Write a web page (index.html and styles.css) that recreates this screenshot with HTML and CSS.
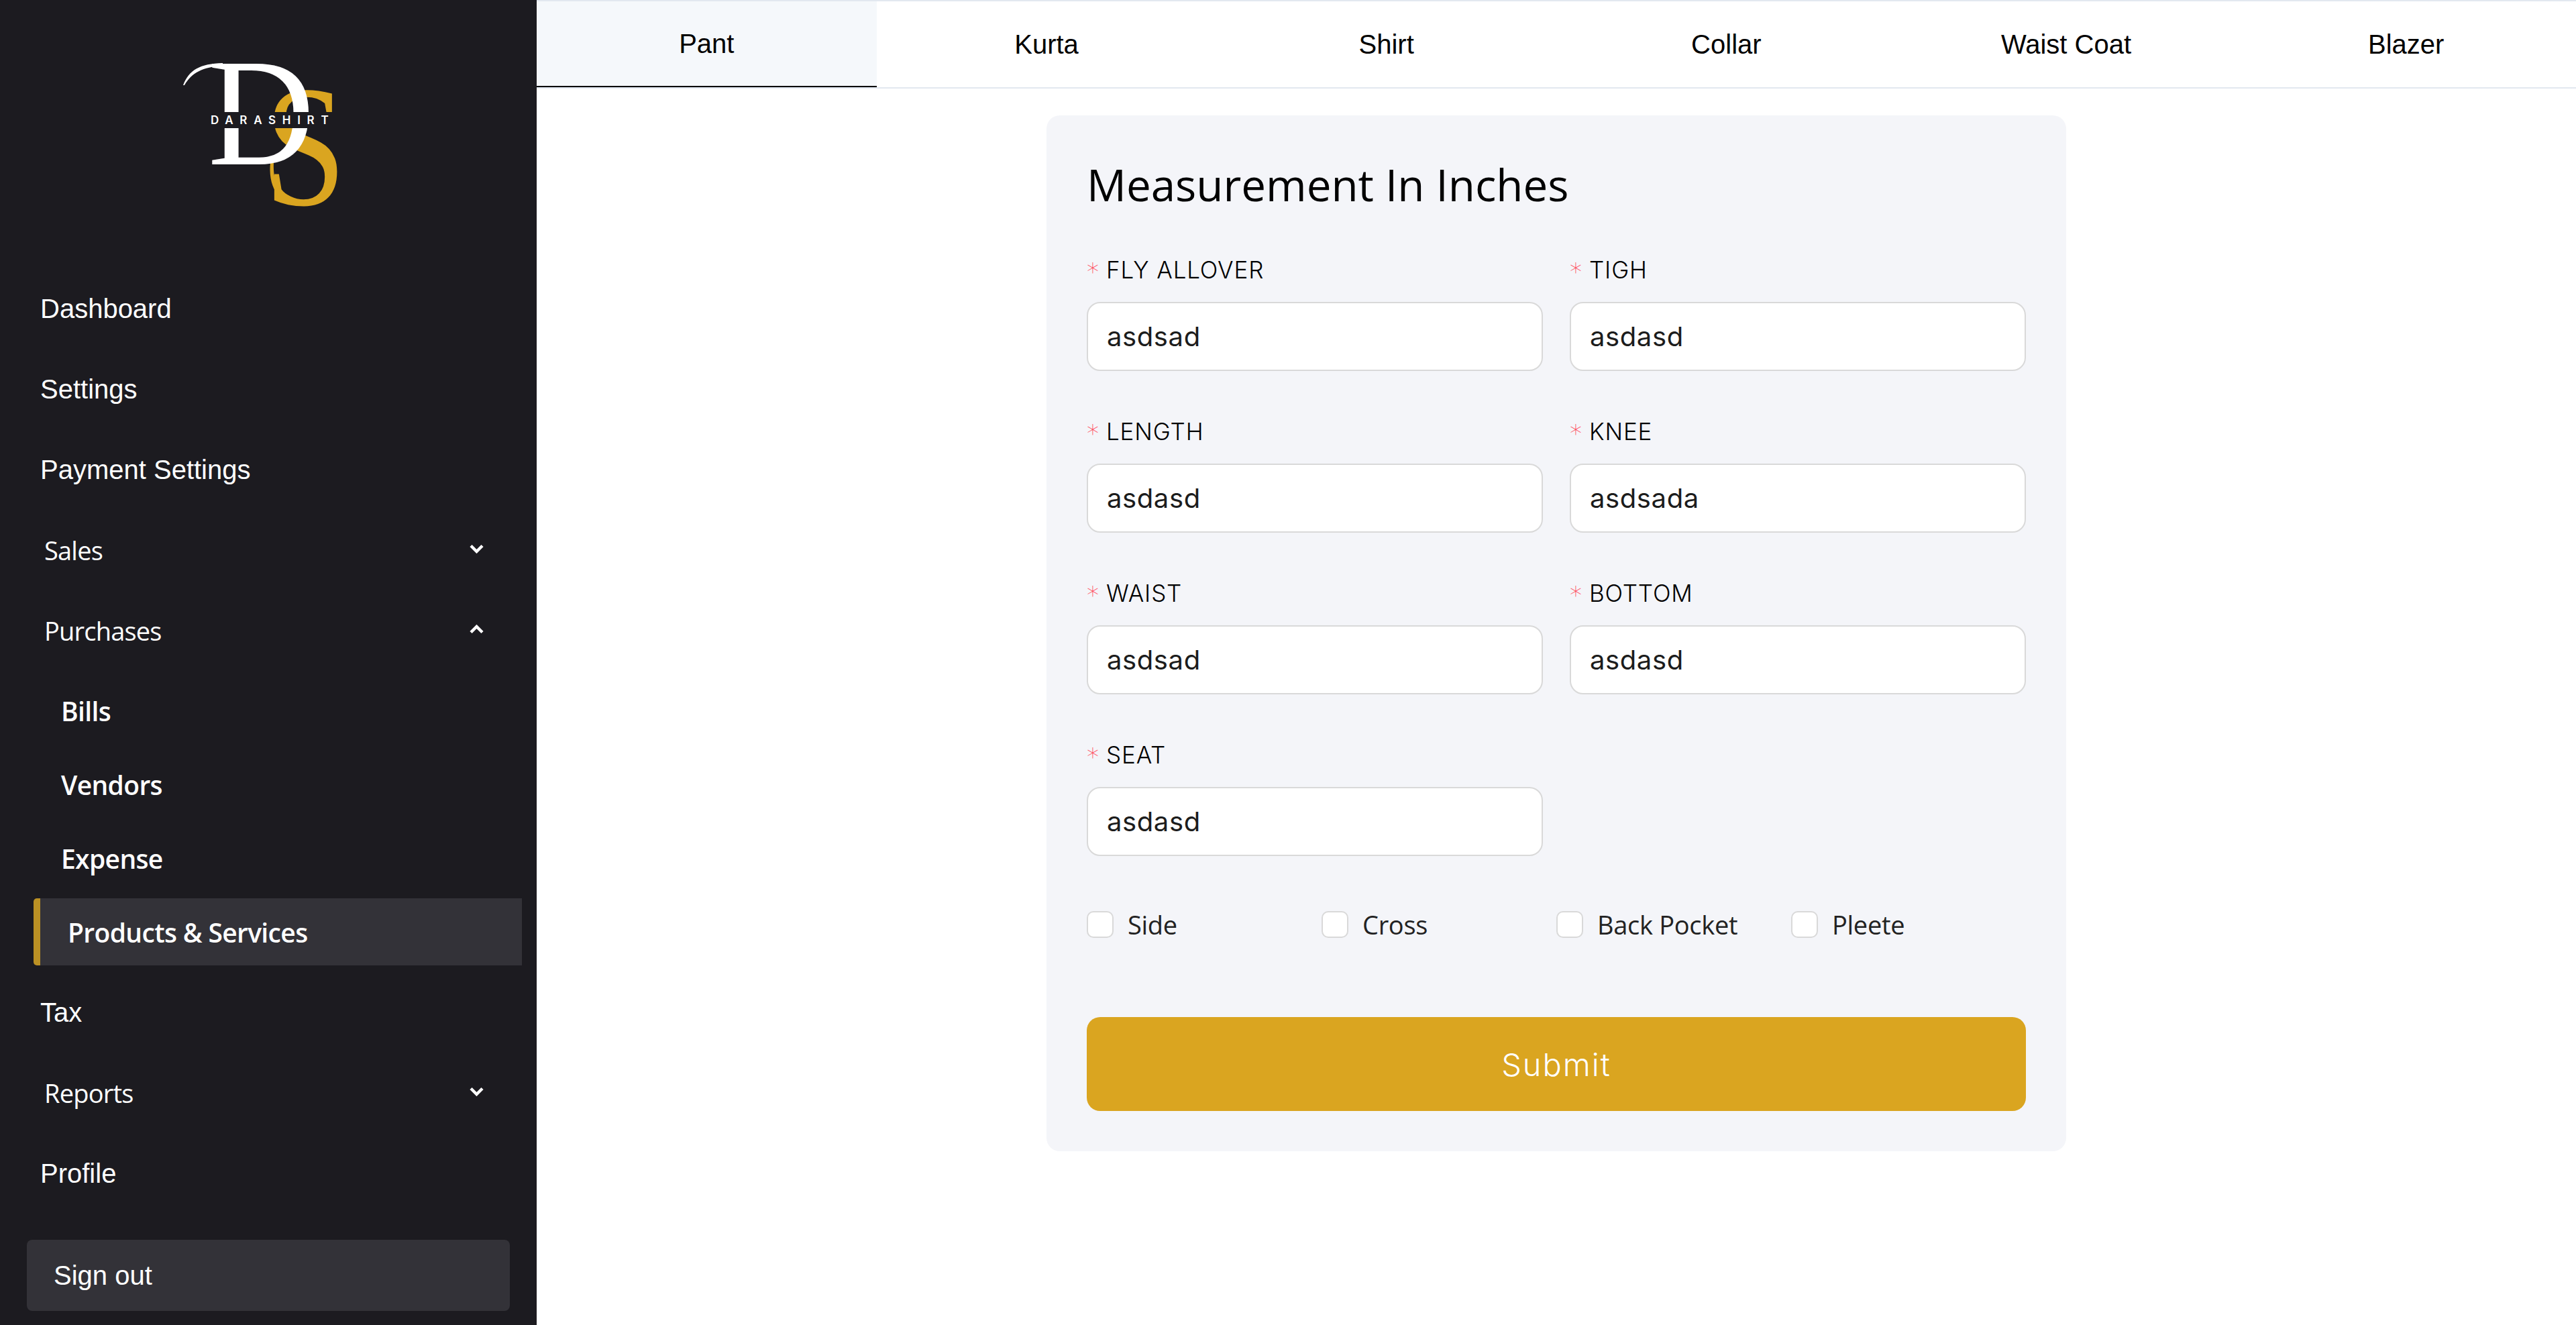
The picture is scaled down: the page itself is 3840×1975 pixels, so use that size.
FILE: index.html
```html
<!DOCTYPE html>
<html lang="en">
<head>
  <meta charset="UTF-8" />
  <title>Darashirt - Measurement</title>
  <link rel="stylesheet" href="styles.css">
</head>
<body>
  <aside class="sidebar">
    <div class="logo">
      <svg width="280" height="240" viewBox="260 80 280 240">
        <text class="logo-s" transform="translate(394 305) scale(.85 1)">S</text>
        <path class="logo-loop" d="M403 243 C399 283 420 307 450 307 L450 299 C424 299 406 280 408 243 Z" />
        <text class="logo-d" transform="translate(310 245) scale(.96 1)">D</text>
        <path class="logo-swash" d="M273 127 C282 104 298 95 332 94 L332 98 C302 100 286 108 275 127 Z" />
        <rect class="logo-band" x="300" y="167" width="210" height="24" />
        <text class="logo-name" x="314" y="185">DARASHIRT</text>
      </svg>
    </div>

    <nav class="menu">
      <a class="menu-link">Dashboard</a>
      <a class="menu-link">Settings</a>
      <a class="menu-link">Payment Settings</a>
      <a class="menu-link menu-group">Sales
        <svg class="chevron" width="21" height="14" viewBox="0 0 21 14"><path d="M2 2.5 L10.5 11 L19 2.5" /></svg>
      </a>
      <a class="menu-link menu-group">Purchases
        <svg class="chevron" width="21" height="14" viewBox="0 0 21 14"><path d="M2 11.5 L10.5 3 L19 11.5" /></svg>
      </a>
      <div class="submenu">
        <a class="submenu-link">Bills</a>
        <a class="submenu-link">Vendors</a>
        <a class="submenu-link">Expense</a>
        <a class="submenu-link active">Products &amp; Services</a>
      </div>
      <a class="menu-link">Tax</a>
      <a class="menu-link menu-group">Reports
        <svg class="chevron" width="21" height="14" viewBox="0 0 21 14"><path d="M2 2.5 L10.5 11 L19 2.5" /></svg>
      </a>
      <a class="menu-link">Profile</a>
    </nav>

    <button class="signout">Sign out</button>
  </aside>

  <div class="content">
    <div class="tabs">
      <div class="tab active">Pant</div>
      <div class="tab">Kurta</div>
      <div class="tab">Shirt</div>
      <div class="tab">Collar</div>
      <div class="tab">Waist Coat</div>
      <div class="tab">Blazer</div>
    </div>

    <form class="card">
      <h2>Measurement In Inches</h2>

      <div class="fields">
        <div class="field">
          <label><span class="req">*</span>FLY ALLOVER</label>
          <input type="text" value="asdsad" />
        </div>
        <div class="field">
          <label><span class="req">*</span>TIGH</label>
          <input type="text" value="asdasd" />
        </div>
        <div class="field">
          <label><span class="req">*</span>LENGTH</label>
          <input type="text" value="asdasd" />
        </div>
        <div class="field">
          <label><span class="req">*</span>KNEE</label>
          <input type="text" value="asdsada" />
        </div>
        <div class="field">
          <label><span class="req">*</span>WAIST</label>
          <input type="text" value="asdsad" />
        </div>
        <div class="field">
          <label><span class="req">*</span>BOTTOM</label>
          <input type="text" value="asdasd" />
        </div>
        <div class="field">
          <label><span class="req">*</span>SEAT</label>
          <input type="text" value="asdasd" />
        </div>
      </div>

      <div class="checks">
        <label class="check"><input type="checkbox" />Side</label>
        <label class="check"><input type="checkbox" />Cross</label>
        <label class="check"><input type="checkbox" />Back Pocket</label>
        <label class="check"><input type="checkbox" />Pleete</label>
      </div>

      <button class="submit" type="button">Submit</button>
    </form>
  </div>
</body>
</html>
```

FILE: styles.css
```css
* {
  box-sizing: border-box;
}
body {
  margin: 0;
  height: 100vh;
  display: flex;
  overflow: hidden;
  background: #fff;
  font-family: 'Liberation Sans', sans-serif;
}

/* sidebar */
.sidebar {
  width: 800px;
  flex-shrink: 0;
  background: #1c1b20;
  color: #fff;
  padding-top: 80px;
}
.logo {
  display: flex;
  justify-content: center;
  height: 240px;
  margin-bottom: 90px;
}
.logo svg {
  overflow: visible;
}
.logo-d {
  font: 229px 'Liberation Serif', serif;
  fill: #fff;
}
.logo-s {
  font: 258px 'Liberation Serif', serif;
  fill: #daa520;
}
.logo-loop {
  fill: #daa520;
}
.logo-swash {
  fill: #fff;
}
.logo-band {
  fill: #1c1b20;
}
.logo-name {
  font: 600 17px 'Inter', sans-serif;
  letter-spacing: 9.7px;
  fill: #fff;
}
.menu-link {
  display: flex;
  align-items: center;
  height: 100px;
  margin-bottom: 20px;
  padding-left: 60px;
  font-size: 40px;
}
.menu-group {
  justify-content: space-between;
  padding: 0 79px 0 66px;
  font-family: 'Open Sans', sans-serif;
  font-size: 38px;
  letter-spacing: -0.8px;
}
.chevron {
  margin-top: -4px;
}
.chevron path {
  fill: none;
  stroke: #fff;
  stroke-width: 4.5;
}
.submenu {
  margin-top: -1px;
  margin-bottom: 20px;
}
.submenu-link {
  display: flex;
  align-items: center;
  height: 100px;
  margin-bottom: 10px;
  padding-left: 91px;
  font-family: 'Open Sans', sans-serif;
  font-size: 39px;
  font-weight: 600;
  letter-spacing: -0.65px;
}
.submenu-link.active {
  width: 728px;
  margin-left: 50px;
  margin-bottom: 0;
  padding-left: 41px;
  background: #333238;
  border-left: 10px solid #bb9124;
  border-radius: 5px 0 0 5px;
}
.signout {
  display: block;
  width: 720px;
  height: 106px;
  margin: 49px 0 0 40px;
  padding: 0 0 0 40px;
  border: none;
  border-radius: 8px;
  background: #333238;
  color: #fff;
  text-align: left;
  font-family: 'Liberation Sans', sans-serif;
  font-size: 40px;
}

/* tabs */
.content {
  flex: 1;
  min-width: 0;
}
.tabs {
  display: flex;
  height: 132px;
  border-top: 2px solid #e2e8f0;
  border-bottom: 2px solid #e2e8f0;
}
.tab {
  flex: 1;
  display: flex;
  align-items: center;
  justify-content: center;
  font-size: 40px;
  color: #000;
}
.tab.active {
  background: #f5f8fb;
  border-bottom: 2.5px solid #000;
}

/* form card */
.card {
  width: 1520px;
  margin: 40px auto 0;
  padding: 58px 60px 60px;
  background: #f4f5f9;
  border-radius: 20px;
}
.card h2 {
  margin: 0 0 52px;
  font-family: 'Open Sans', sans-serif;
  font-size: 65.5px;
  font-weight: 400;
  line-height: 90px;
  color: #000;
}
.fields {
  display: grid;
  grid-template-columns: 680px 680px;
  column-gap: 40px;
  row-gap: 60px;
}
.field label {
  display: flex;
  align-items: center;
  height: 59px;
  margin-bottom: 19px;
  font-family: 'Inter', sans-serif;
  font-size: 35px;
  font-weight: 300;
  letter-spacing: 0.85px;
  color: #000;
}
.req {
  width: 29px;
  padding-top: 6px;
  color: #ff4d5e;
  font-family: 'DejaVu Sans', sans-serif;
  font-size: 36px;
  letter-spacing: 0;
}
.field input {
  display: block;
  width: 100%;
  height: 103px;
  padding: 0 28px;
  border: 2.5px solid #d9d9d9;
  border-radius: 20px;
  background: #fff;
  font-family: 'Inter', sans-serif;
  font-size: 40px;
  letter-spacing: 0.6px;
  color: #1c1c1c;
}
.checks {
  display: flex;
  margin-top: 76px;
}
.check {
  width: 350px;
  display: flex;
  align-items: center;
  gap: 21px;
  font-family: 'Open Sans', sans-serif;
  font-size: 38px;
  letter-spacing: -0.3px;
  color: #222;
}
.check input {
  appearance: none;
  width: 40px;
  height: 40px;
  margin: 0;
  background: #fff;
  border: 2.5px solid #d9d9d9;
  border-radius: 10px;
}
.submit {
  display: block;
  width: 1400px;
  height: 140px;
  margin-top: 112px;
  border: none;
  border-radius: 20px;
  background: #daa520;
  color: #fff;
  font-family: 'Inter', sans-serif;
  font-size: 47px;
  font-weight: 300;
  letter-spacing: 2px;
}
```
